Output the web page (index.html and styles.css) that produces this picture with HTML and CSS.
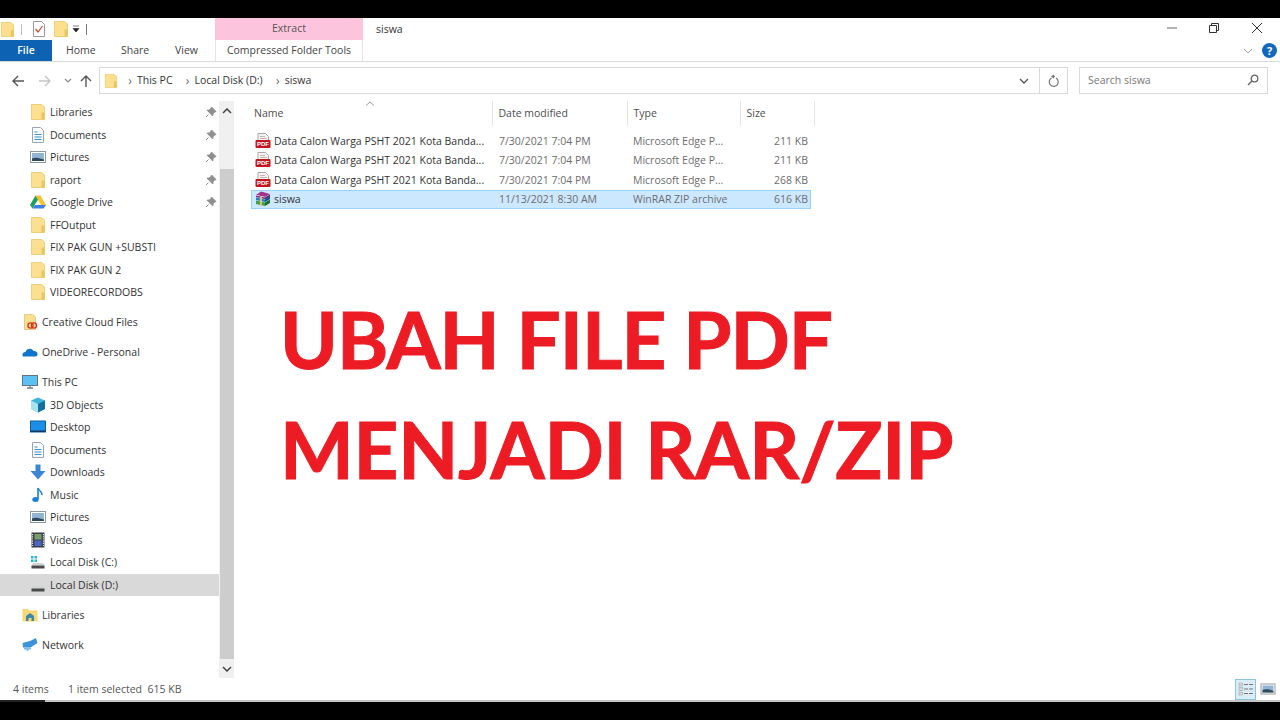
FILE: index.html
```html
<!DOCTYPE html>
<html lang="en">
<head>
<meta charset="utf-8">
<title>siswa</title>
<link rel="stylesheet" href="styles.css">
</head>
<body>
<svg class="defs" width="0" height="0" aria-hidden="true">
  <defs>
    <symbol id="folder" viewBox="0 0 16 16">
      <path d="M1.500 .5h10l3 2.500v12.500h-13z" fill="#fde08f" stroke="#e8c766" stroke-width=".8"/>
      <path d="M11.500 8.500h3v7h-3z" fill="#e9c45f"/>
    </symbol>
    <symbol id="doc" viewBox="0 0 16 16">
      <path d="M2.500 .5h8l3 3v12h-11z" fill="#f7f9fb" stroke="#9aa5b1"/>
      <path d="M4.500 5h3M4.500 7.500h7M4.500 10h7M4.500 12.500h7" stroke="#3f93c9" stroke-width="1"/>
    </symbol>
    <symbol id="pic" viewBox="0 0 16 16">
      <rect x=".5" y="2.500" width="15" height="11" fill="#fff" stroke="#8b98a5"/>
      <rect x="2" y="4" width="12" height="8" fill="#8fb4d6"/>
      <path d="M2 12V9.500c3-1.500 6-1 12 1V12z" fill="#2f4a5e"/>
    </symbol>
    <symbol id="pin" viewBox="0 0 12 12">
      <path d="M6.500 1l4.500 4.500-1.200.5L8 7.500 7.800 10 2 4.200l2.500-.2L6 2.200z M3.500 8.500L1 11" fill="#8f8f8f" stroke="#8f8f8f"/>
    </symbol>
    <symbol id="pdf" viewBox="0 0 16 16">
      <path d="M3 .5h7.500l3 3V8H3z" fill="#f4f4f4" stroke="#a9a9a9"/>
      <path d="M5 3.500h5M5 5.500h7" stroke="#c9a0a0" stroke-width=".8"/>
      <rect x=".5" y="7" width="15" height="8" rx="1" fill="#c0181e"/>
      <text x="8" y="13.200" font-family="Liberation Sans" font-size="6" font-weight="700" fill="#fff" text-anchor="middle">PDF</text>
    </symbol>
    <symbol id="rar" viewBox="0 0 16 16">
      <path d="M1 4l5-3.500 9 2.500-5 3z" fill="#a2328c"/>
      <path d="M1 4l9 2v1.500L1 5.500z" fill="#fff"/>
      <path d="M1 4.500V6l9 2V6.500z" fill="#7a2478"/>
      <path d="M10 6.500l5-3v2l-5 3z" fill="#4f1f6a"/>
      <path d="M1 6.500l9 2V11L1 9z" fill="#2a7fc4"/>
      <path d="M10 8.500l5-3v2.500l-5 3z" fill="#14507f"/>
      <path d="M1 9.500l9 2V15l-9-2z" fill="#3fa648"/>
      <path d="M10 11.500l5-3V12l-5 3z" fill="#1d6d2d"/>
      <path d="M5 5.500l2 .4v9l-2-.4z" fill="#d9c27a"/>
    </symbol>
    <symbol id="drive" viewBox="0 0 16 16">
      <path d="M5.500 1.500h5L16 11h-5z" fill="#fbc02d"/>
      <path d="M5.500 1.500L0 11l2.500 3.500L8 5.800z" fill="#1e9e5a"/>
      <path d="M5 11h11l-2.500 3.500h-11z" fill="#3f7ee8"/>
    </symbol>
    <symbol id="disk" viewBox="0 0 16 16">
      <path d="M3 9h10l1.500 2.500H1.500z" fill="#cfd3d6"/>
      <rect x="1.500" y="11.500" width="13" height="3" fill="#4a4a4a"/>
    </symbol>
  </defs>
</svg>

<div class="window">
  <header class="titlebar">
    <div class="qat">
      <svg class="ico16 q1"><use href="#folder"/></svg>
      <span class="qsep"></span>
      <svg class="ico16" viewBox="0 0 16 16"><path d="M2.500 .5h8l3 3v12h-11z" fill="#fff" stroke="#9a9a9a"/><path d="M4.500 8l2.500 3 4.500-6" fill="none" stroke="#d2492a" stroke-width="1.200"/></svg>
      <svg class="ico16 q3"><use href="#folder"/></svg>
      <svg class="qdrop" viewBox="0 0 8 8"><path d="M1 1h6M1 3.500h6L4 7z" fill="#222" stroke="#222" stroke-width=".6"/></svg>
      <span class="qsep dark"></span>
    </div>
    <div class="ctx-title">Extract</div>
    <div class="win-title">siswa</div>
    <div class="win-btns">
      <svg viewBox="0 0 46 22"><path d="M25 10h10" stroke="#666" stroke-width="1"/></svg>
      <svg viewBox="0 0 46 22"><path d="M21.500 7.500h7v7h-7zM23.500 7V5.500h7v7H29" fill="none" stroke="#333"/></svg>
      <svg viewBox="0 0 46 22"><path d="M18 5l10 10M28 5L18 15" stroke="#333" fill="none"/></svg>
    </div>
  </header>

  <nav class="tabs">
    <div class="tab file">File</div>
    <div class="tab home">Home</div>
    <div class="tab share">Share</div>
    <div class="tab view">View</div>
    <div class="tab ctx">Compressed Folder Tools</div>
    <div class="help">
      <svg class="chev" viewBox="0 0 10 6"><path d="M1 1l4 4 4-4" fill="none" stroke="#a0a0a0"/></svg>
      <span class="help-ball">?</span>
    </div>
  </nav>

  <div class="addressrow">
    <div class="navbtns">
      <svg class="nav-ico" viewBox="0 0 14 14"><path d="M13 7H2M7 2L2 7l5 5" fill="none" stroke="#555" stroke-width="1.400"/></svg>
      <svg class="nav-ico dim" viewBox="0 0 14 14"><path d="M1 7h11M7 2l5 5-5 5" fill="none" stroke="#c4c4c4" stroke-width="1.400"/></svg>
      <svg class="nav-small" viewBox="0 0 8 6"><path d="M1 1l3 3 3-3" fill="none" stroke="#888" stroke-width="1.200"/></svg>
      <svg class="nav-ico" viewBox="0 0 14 14"><path d="M7 13V2M2 7l5-5 5 5" fill="none" stroke="#555" stroke-width="1.400"/></svg>
    </div>
    <div class="addressbox">
      <svg class="ico-addr"><use href="#folder"/></svg>
      <span class="crumb-sep">›</span><span class="crumb">This PC</span>
      <span class="crumb-sep">›</span><span class="crumb">Local Disk (D:)</span>
      <span class="crumb-sep">›</span><span class="crumb">siswa</span>
      <svg class="addr-drop" viewBox="0 0 10 6"><path d="M1 1l4 4 4-4" fill="none" stroke="#555" stroke-width="1.300"/></svg>
      <span class="refresh">
        <svg viewBox="0 0 12 14"><path d="M4 2.500h3M6 1l-2 1.500L6 4M8 4a4.500 4.500 0 1 1-4.500 0" fill="none" stroke="#777" stroke-width="1.200"/></svg>
      </span>
    </div>
    <div class="searchbox">
      <span>Search siswa</span>
      <svg viewBox="0 0 12 12"><circle cx="7.500" cy="4.500" r="3.300" fill="none" stroke="#666" stroke-width="1.300"/><path d="M5 7l-4 4" stroke="#666" stroke-width="1.500"/></svg>
    </div>
  </div>

  <main class="main">
    <aside class="sidebar">
      <div class="tree">
        <section class="group">
          <div class="row l2"><svg class="ico16"><use href="#folder"/></svg><span>Libraries</span><svg class="pin"><use href="#pin"/></svg></div>
          <div class="row l2"><svg class="ico16"><use href="#doc"/></svg><span>Documents</span><svg class="pin"><use href="#pin"/></svg></div>
          <div class="row l2"><svg class="ico16"><use href="#pic"/></svg><span>Pictures</span><svg class="pin"><use href="#pin"/></svg></div>
          <div class="row l2"><svg class="ico16"><use href="#folder"/></svg><span>raport</span><svg class="pin"><use href="#pin"/></svg></div>
          <div class="row l2"><svg class="ico16"><use href="#drive"/></svg><span>Google Drive</span><svg class="pin"><use href="#pin"/></svg></div>
          <div class="row l2"><svg class="ico16"><use href="#folder"/></svg><span>FFOutput</span></div>
          <div class="row l2"><svg class="ico16"><use href="#folder"/></svg><span>FIX PAK GUN +SUBSTI</span></div>
          <div class="row l2"><svg class="ico16"><use href="#folder"/></svg><span>FIX PAK GUN 2</span></div>
          <div class="row l2"><svg class="ico16"><use href="#folder"/></svg><span>VIDEORECORDOBS</span></div>
        </section>
        <section class="group">
          <div class="row l1"><svg class="ico16" viewBox="0 0 16 16"><path d="M2.500 .5h8l3 2.500v12.500h-11z" fill="#fde08f" stroke="#d8c27e" stroke-width=".8"/><circle cx="8.500" cy="11.500" r="2.600" fill="none" stroke="#d8321f" stroke-width="1.300"/><circle cx="12" cy="11.500" r="2.600" fill="none" stroke="#d8321f" stroke-width="1.300"/></svg><span>Creative Cloud Files</span></div>
        </section>
        <section class="group">
          <div class="row l1"><svg class="ico16" viewBox="0 0 16 16"><path d="M1 12.500c-1.500-2 0-4.500 2.500-4.500C4.500 4 10 3.500 11.500 7c2.500-.5 4.500 1.500 4 3.500-.2 1.200-1 2-2 2z" fill="#0f74cc"/></svg><span>OneDrive - Personal</span></div>
        </section>
        <section class="group">
          <div class="row l1"><svg class="ico16" viewBox="0 0 16 16"><rect x=".5" y="1.500" width="15" height="10" fill="#5cc0f2" stroke="#5f7487"/><path d="M5 14h6M8 11.500V14" stroke="#6f7d8a" stroke-width="1.300"/></svg><span>This PC</span></div>
          <div class="row l2"><svg class="ico16" viewBox="0 0 16 16"><path d="M8 .5l7 3V12l-7 3.500L1 12V3.500z" fill="#3fb4dc"/><path d="M8 7l7-3.500V12l-7 3.500z" fill="#15709f"/><path d="M1 3.500L8 7v8.500L1 12z" fill="#a6e3ee"/></svg><span>3D Objects</span></div>
          <div class="row l2"><svg class="ico16" viewBox="0 0 16 16"><rect x=".5" y="2" width="15" height="11" fill="#1b8fe6" stroke="#0d5ea8"/><rect x=".5" y="11.500" width="15" height="1.500" fill="#123a60"/></svg><span>Desktop</span></div>
          <div class="row l2"><svg class="ico16"><use href="#doc"/></svg><span>Documents</span></div>
          <div class="row l2"><svg class="ico16" viewBox="0 0 16 16"><path d="M5.500 .5h5V7h5L8 15.500.5 7h5z" fill="#3b86d6"/></svg><span>Downloads</span></div>
          <div class="row l2"><svg class="ico16" viewBox="0 0 16 16"><path d="M8 1v11" stroke="#1781d8" stroke-width="1.600"/><ellipse cx="5.500" cy="12.500" rx="3.200" ry="2.500" fill="#1781d8"/><path d="M8 1c1 3 4 3 4 7" fill="none" stroke="#1781d8" stroke-width="1.400"/></svg><span>Music</span></div>
          <div class="row l2"><svg class="ico16"><use href="#pic"/></svg><span>Pictures</span></div>
          <div class="row l2"><svg class="ico16" viewBox="0 0 16 16"><rect x="1.500" y=".5" width="13" height="15" fill="#3b3f45"/><rect x="4.500" y="2" width="7" height="5.500" fill="#75a06c"/><rect x="4.500" y="8.500" width="7" height="5.500" fill="#4a66c4"/><path d="M2.500 2v12M13.500 2v12" stroke="#e6e6e6" stroke-width="1.200" stroke-dasharray="1.200 1"/></svg><span>Videos</span></div>
          <div class="row l2"><svg class="ico16" viewBox="0 0 16 16"><use href="#disk"/><path d="M1 2h2.500v2.500H1zM4.500 2H7v2.500H4.500zM1 5.500h2.500V8H1zM4.500 5.500H7V8H4.500z" fill="#25b5c9"/></svg><span>Local Disk (C:)</span></div>
          <div class="row l2 active"><svg class="ico16"><use href="#disk"/></svg><span>Local Disk (D:)</span></div>
        </section>
        <section class="group">
          <div class="row l1"><svg class="ico16" viewBox="0 0 16 16"><path d="M.5 2h5.500l1.500 1.500h8v11H.5z" fill="#f8d775"/><path d="M4 9l4-3 4 3v5H9.500v-3h-3v3H4z" fill="#3d8aa8"/></svg><span>Libraries</span></div>
        </section>
        <section class="group">
          <div class="row l1"><svg class="ico16" viewBox="0 0 16 16"><path d="M8 4l6-3 1.500 5-7 4.500H1L.5 6z" fill="#3b93d9"/><path d="M2 10.500h7v2H6.500v1.500h-2v-1.500H2z" fill="#7fbde8"/></svg><span>Network</span></div>
        </section>
      </div>
      <div class="scrollbar">
        <svg class="sb-arrow" viewBox="0 0 10 6"><path d="M1 5l4-4 4 4" fill="none" stroke="#444" stroke-width="1.500"/></svg>
        <div class="sb-gap"></div>
        <div class="sb-thumb"></div>
        <svg class="sb-arrow" viewBox="0 0 10 6"><path d="M1 1l4 4 4-4" fill="none" stroke="#444" stroke-width="1.500"/></svg>
      </div>
    </aside>

    <section class="content">
      <div class="list">
        <div class="list-head">
          <div class="col name">Name<svg class="sort" viewBox="0 0 10 5"><path d="M1 4.500L5 1l4 3.500" fill="none" stroke="#9a9a9a"/></svg></div>
          <div class="col">Date modified</div>
          <div class="col">Type</div>
          <div class="col">Size</div>
        </div>
        <div class="file-row"><div class="fname"><svg class="ico16"><use href="#pdf"/></svg><span>Data Calon Warga PSHT 2021 Kota Banda...</span></div><div>7/30/2021 7:04 PM</div><div>Microsoft Edge P...</div><div class="size">211 KB</div></div>
        <div class="file-row"><div class="fname"><svg class="ico16"><use href="#pdf"/></svg><span>Data Calon Warga PSHT 2021 Kota Banda...</span></div><div>7/30/2021 7:04 PM</div><div>Microsoft Edge P...</div><div class="size">211 KB</div></div>
        <div class="file-row"><div class="fname"><svg class="ico16"><use href="#pdf"/></svg><span>Data Calon Warga PSHT 2021 Kota Banda...</span></div><div>7/30/2021 7:04 PM</div><div>Microsoft Edge P...</div><div class="size">268 KB</div></div>
        <div class="file-row selected"><div class="fname"><svg class="ico16"><use href="#rar"/></svg><span>siswa</span></div><div>11/13/2021 8:30 AM</div><div>WinRAR ZIP archive</div><div class="size">616 KB</div></div>
      </div>
      <h1 class="headline"><span class="line first">UBAH FILE PDF</span><span class="line second">MENJADI RAR/ZIP</span></h1>
    </section>
  </main>

  <footer class="status">
    <span class="count">4 items</span>
    <span>1 item selected&nbsp; 615 KB</span>
    <div class="views">
      <span class="view-btn on">
        <svg viewBox="0 0 16 14"><rect x="1" y="1" width="3.500" height="3" fill="#d8d8e0" stroke="#999" stroke-width=".5"/><rect x="1" y="5.500" width="3.500" height="3" fill="#d8d8e0" stroke="#999" stroke-width=".5"/><rect x="1" y="10" width="3.500" height="3" fill="#d8d8e0" stroke="#999" stroke-width=".5"/><path d="M6 2.500h4M11 2.500h4M6 7h4M11 7h4M6 11.500h4M11 11.500h4" stroke="#777"/></svg>
      </span>
      <span class="view-btn">
        <svg viewBox="0 0 16 14"><rect x="1" y="2" width="14" height="10" fill="#fff" stroke="#9a9a9a"/><rect x="2.500" y="3.500" width="11" height="7" fill="#8fb4d6"/><path d="M2.500 10.500V8c3-1 6-1 11 1v1.500z" fill="#2f4a5e"/></svg>
      </span>
    </div>
  </footer>
</div>
<div class="progress"><div class="progress-done"></div></div>
</body>
</html>
```
FILE: styles.css
```css
* { box-sizing: border-box; }
html, body { margin: 0; height: 720px; overflow: hidden; }
body {
  background: #000;
  padding-top: 18px;
  font-family: "Open Sans", "Noto Sans", "Liberation Sans", sans-serif;
  font-size: 10.5px;
  color: #333;
  display: flex;
  flex-direction: column;
}
.defs { position: absolute; }
.window {
  width: 1280px;
  height: 682px;
  flex: none;
  background: #fff;
  display: flex;
  flex-direction: column;
}
.progress { height: 2px; flex: none; background: #c4c4c4; }
.progress-done { width: 45px; height: 2px; background: #222; }
.ico16 { width: 16px; height: 16px; flex: none; display: block; }

/* title bar */
.titlebar { height: 22px; display: flex; flex: none; align-items: stretch; }
.qat { width: 215px; display: flex; align-items: center; flex: none; }
.qat .q1 { width: 15px; height: 15px; }
.qsep { width: 1px; height: 11px; background: #bbb; margin: 0 9px 0 6px; }
.qsep.dark { background: #777; margin: 0 0 0 6px; }
.q3 { margin-left: 6px; }
.qdrop { width: 8px; height: 8px; margin-left: 3px; }
.ctx-title {
  width: 148px; background: #fdc4de; text-align: center; line-height: 20px; color: #555; flex: none;
}
.win-title { margin-left: 13px; line-height: 22px; color: #333; flex: 1; }
.win-btns { display: flex; }
.win-btns svg { width: 46px; height: 22px; display: block; }

/* tabs */
.tabs {
  height: 22px; flex: none; display: flex; align-items: stretch;
  border-bottom: 1px solid #dadada;
}
.tab { line-height: 20px; color: #444; flex: none; }
.tab.file { width: 52px; background: #0d62b4; color: #fff; text-align: center; font-weight: 600; }
.tab.home { margin-left: 14px; width: 55px; }
.tab.share { width: 54px; }
.tab.view { width: 40px; }
.tab.ctx {
  width: 148px; text-align: center;
  border-left: 1px solid #e4e4e4; border-right: 1px solid #e4e4e4;
}
.help { margin-left: auto; display: flex; align-items: center; gap: 9px; padding-right: 3px; }
.chev { width: 10px; height: 6px; }
.help-ball {
  width: 15px; height: 15px; border-radius: 50%; background: #1168bd; color: #fff;
  font-size: 11px; font-weight: 700; text-align: center; line-height: 15px;
}

/* address */
.addressrow { height: 39px; flex: none; display: flex; align-items: flex-start; padding-top: 5px; }
.navbtns { width: 99px; height: 27px; display: flex; align-items: center; flex: none; padding-left: 11px; }
.nav-ico { width: 14px; height: 14px; }
.nav-ico.dim { margin-left: 13px; }
.nav-small { width: 8px; height: 6px; margin: 0 7px 0 12px; }
.addressbox {
  width: 969px; height: 27px; border: 1px solid #d9d9d9; display: flex; align-items: center;
  padding-left: 4px; color: #333; flex: none;
}
.ico-addr { width: 14px; height: 16px; margin-right: 5px; }
.crumb-sep { color: #666; width: 14px; text-align: center; font-size: 12px; }
.crumb { margin: 0 8px 1px 0; }
.addr-drop { width: 10px; height: 6px; margin-left: auto; margin-right: 10px; }
.refresh { width: 28px; height: 25px; border-left: 1px solid #d9d9d9; display: flex; align-items: center; justify-content: center; }
.refresh svg { width: 12px; height: 14px; }
.searchbox {
  width: 189px; height: 27px; margin-left: 11px; border: 1px solid #d9d9d9; display: flex;
  align-items: center; justify-content: space-between; padding: 0 8px 1px; color: #777; flex: none;
}
.searchbox svg { width: 12px; height: 12px; }

/* main */
.main { flex: 1; display: flex; min-height: 0; }
.sidebar { width: 234px; flex: none; display: flex; }
.tree { width: 219px; flex: none; display: flex; flex-direction: column; gap: 7.5px; }
.row { height: 22.5px; display: flex; align-items: center; color: #333; }
.row.l2 { padding-left: 30px; }
.row.l1 { padding-left: 22px; }
.row .ico16 { margin-right: 4px; }
.pin { width: 12px; height: 12px; margin-left: auto; margin-right: 2px; }
.row.active { background: #d9d9d9; }
.scrollbar {
  width: 15px; flex: none; background: #f0f0f0; display: flex; flex-direction: column;
  align-items: center; height: 577px;
}
.sb-arrow { width: 10px; height: 6px; margin: 7px 0 6px; flex: none; }
.sb-gap { height: 49px; flex: none; }
.sb-thumb { width: 14px; background: #cdcdcd; flex: 1; }

.content { flex: 1; min-width: 0; padding-left: 17px; }
.list-head {
  display: grid;
  grid-template-columns: 242px 135px 113px 74px;
  width: 564px;
  height: 30px;
  color: #4e4e4e;
}
.col {
  border-right: 1px solid #e5e5e5; padding-left: 5.5px; line-height: 24px; height: 25px; position: relative;
}
.col.name { padding-left: 3px; }
.sort { position: absolute; left: 114px; top: 0; width: 10px; height: 5px; }
.file-row {
  display: grid;
  grid-template-columns: 241px 134px 113px 70px;
  width: 560px;
  height: 19.5px;
  align-items: center;
  color: #6d6d6d;
  border: 1px solid transparent;
}
.file-row > div:nth-child(n+2) { padding-left: 6px; white-space: nowrap; }
.file-row > div.size { padding: 0 2px 0 0; text-align: right; }
.fname { display: flex; align-items: center; gap: 3px; padding-left: 3px; color: #333; white-space: nowrap; }
.file-row.selected { background: #cce8ff; border-color: #99d1ff; }
.headline {
  margin: 75px 0 0 29px;
  font-family: Lato, "Open Sans", sans-serif;
  font-weight: 700;
  font-size: 78px;
  line-height: 110px;
  color: #ed1c24;
  -webkit-text-stroke: 1px #ed1c24;
  white-space: nowrap;
}
.line { display: block; }
.line.first { letter-spacing: -1px; }
.line.second { letter-spacing: -0.2px; }

/* status */
.status { height: 22px; flex: none; display: flex; align-items: center; color: #555; padding-left: 13px; }
.count { width: 55px; }
.views { margin-left: auto; display: flex; align-items: center; gap: 1px; padding-right: 2px; }
.view-btn { width: 21px; height: 21px; display: flex; align-items: center; justify-content: center; border: 1px solid transparent; }
.view-btn.on { background: #d9ecf8; border-color: #8cc4de; }
.view-btn svg { width: 16px; height: 14px; }
```
